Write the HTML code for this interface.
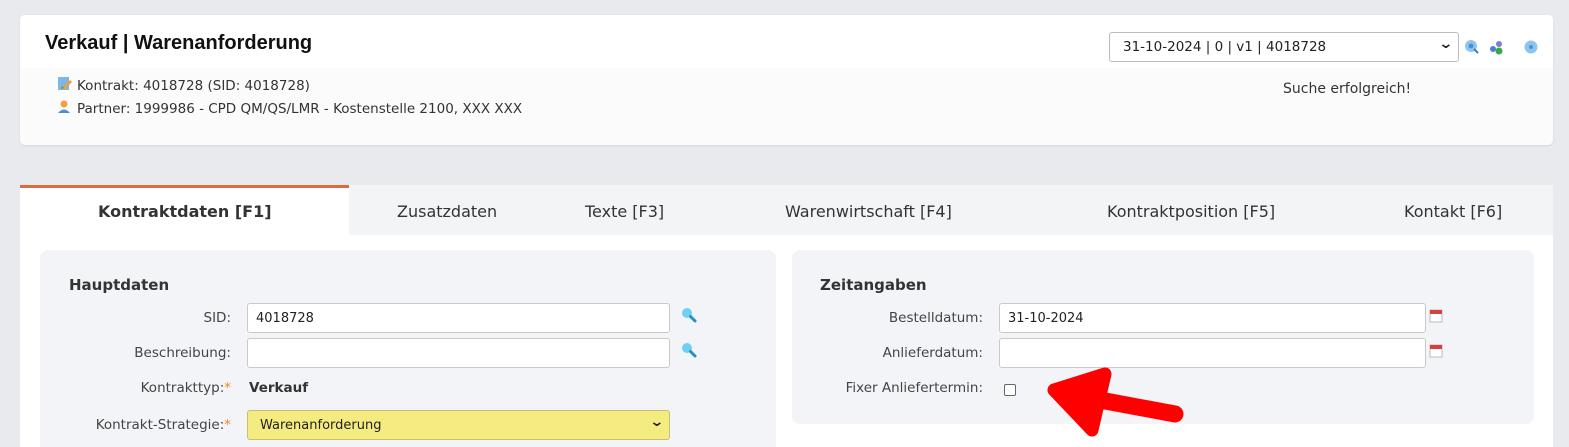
<!DOCTYPE html>
<html><head><meta charset="utf-8"><style>
*{box-sizing:border-box;margin:0;padding:0}
html,body{width:1569px;height:447px;overflow:hidden}
body{background:#e9eaee;font-family:"DejaVu Sans","Liberation Sans",sans-serif;color:#333;position:relative;font-size:13px}
.a{position:absolute}
.card{left:20px;top:15px;width:1533px;height:130px;background:#fbfbfc;border-radius:5px;box-shadow:0 1px 2px rgba(0,0,0,.08)}
.inp{position:absolute;background:#fff;border:1px solid #c9c9c9;border-radius:3px;height:30px;font-size:13px;padding:7px 8px;color:#222}
.lbl{position:absolute;text-align:right;font-size:13.5px;color:#444;white-space:nowrap}
.star{color:#f08a1a}
.mag{position:absolute;width:18px;height:18px}
.sel{position:absolute;right:6px;top:3px;font-size:14px;font-weight:bold;transform:scaleX(1.3)}
</style></head><body>
<div class="a card"></div>
<div class="a" style="left:20px;top:15px;width:1533px;height:53px;background:#fff;border-radius:5px 5px 0 0"></div>
<div class="a" style="left:45px;top:32px;font-family:'Liberation Sans',sans-serif;font-weight:bold;font-size:20px;color:#111">Verkauf | Warenanforderung</div>
<svg class="a" style="left:57px;top:76px" width="16" height="16"><rect x="1" y="1" width="11" height="13" fill="#7fb6e8"/><path d="M5 12 L13 4 L15 6 L7 14Z" fill="#e8a23a"/><path d="M4 13 l3 -1 -2 -2z" fill="#6a9a30"/></svg>
<div class="a" style="left:77px;top:78px;font-size:13.5px">Kontrakt: 4018728 (SID: 4018728)</div>
<svg class="a" style="left:57px;top:99px" width="14" height="15"><circle cx="7" cy="5" r="3.5" fill="#f0a040"/><path d="M1 14 Q7 7 13 14Z" fill="#4a8ed8"/></svg>
<div class="a" style="left:77px;top:101px;font-size:13.5px">Partner: 1999986 - CPD QM/QS/LMR - Kostenstelle 2100, XXX XXX</div>
<div class="a" style="left:1109px;top:32px;width:350px;height:30px;background:#fff;border:1px solid #bbb;border-radius:3px;font-size:13.5px;padding:6px 13px;color:#222">31-10-2024 | 0 | v1 | 4018728<span class="sel">&#8964;</span></div>
<svg class="a" style="left:1464px;top:39px" width="16" height="16"><circle cx="7" cy="7" r="6" fill="#8ec5ee"/><circle cx="7" cy="7" r="2.5" fill="#4a90d0"/><path d="M10 10 L14 14" stroke="#3a7cc0" stroke-width="2"/></svg>
<svg class="a" style="left:1489px;top:40px" width="16" height="16"><circle cx="10" cy="4" r="3" fill="#7a80d8"/><circle cx="4" cy="9" r="3" fill="#4a80d0"/><circle cx="10" cy="11" r="3.5" fill="#3aa84a"/></svg>
<svg class="a" style="left:1523px;top:39px" width="16" height="16"><circle cx="8" cy="8" r="6.5" fill="#8ec5ee"/><circle cx="8" cy="8" r="2" fill="#4a90d0"/></svg>
<div class="a" style="left:1283px;top:81px;font-size:14px;color:#333">Suche erfolgreich!</div>

<div class="a" style="left:20px;top:185px;width:1533px;height:50px;background:#f3f4f6"></div>
<div class="a" style="left:20px;top:185px;width:329px;height:50px;background:#fff;border-top:3px solid #df6a3c"></div>
<div class="a" style="left:20px;top:235px;width:1533px;height:212px;background:#fff"></div>
<div class="a" style="left:98px;top:202px;font-weight:bold;font-size:16px;color:#333">Kontraktdaten [F1]</div>
<div class="a" style="left:397px;top:202px;font-size:16px;color:#333">Zusatzdaten</div>
<div class="a" style="left:585px;top:202px;font-size:16px;color:#333">Texte [F3]</div>
<div class="a" style="left:785px;top:202px;font-size:16px;color:#333">Warenwirtschaft [F4]</div>
<div class="a" style="left:1107px;top:202px;font-size:16px;color:#333">Kontraktposition [F5]</div>
<div class="a" style="left:1404px;top:202px;font-size:16px;color:#333">Kontakt [F6]</div>

<div class="a" style="left:40px;top:250px;width:736px;height:210px;background:#f3f4f8;border-radius:8px"></div>
<div class="a" style="left:69px;top:276px;font-weight:bold;font-size:15px;color:#333">Hauptdaten</div>
<div class="lbl" style="left:30px;width:201px;top:310px">SID:</div>
<div class="inp" style="left:247px;top:303px;width:423px">4018728</div>
<svg class="mag" style="left:680px;top:306px" viewBox="0 0 18 18"><circle cx="7" cy="7" r="5" fill="#6fd0f0"/><path d="M10.5 10.5 L15 15" stroke="#2a8ec8" stroke-width="3" stroke-linecap="round"/></svg>
<div class="lbl" style="left:30px;width:201px;top:345px">Beschreibung:</div>
<div class="inp" style="left:247px;top:338px;width:423px"></div>
<svg class="mag" style="left:680px;top:341px" viewBox="0 0 18 18"><circle cx="7" cy="7" r="5" fill="#6fd0f0"/><path d="M10.5 10.5 L15 15" stroke="#2a8ec8" stroke-width="3" stroke-linecap="round"/></svg>
<div class="lbl" style="left:30px;width:201px;top:380px">Kontrakttyp:<span class="star">*</span></div>
<div class="a" style="left:249px;top:380px;font-weight:bold;font-size:13.5px">Verkauf</div>
<div class="lbl" style="left:30px;width:201px;top:417px">Kontrakt-Strategie:<span class="star">*</span></div>
<div class="inp" style="left:247px;top:410px;width:423px;background:#f4ec80;border-color:#c8c070;padding-left:12px">Warenanforderung<span class="sel">&#8964;</span></div>

<div class="a" style="left:792px;top:250px;width:742px;height:174px;background:#f3f4f8;border-radius:8px"></div>
<div class="a" style="left:820px;top:276px;font-weight:bold;font-size:15px;color:#333">Zeitangaben</div>
<div class="lbl" style="left:790px;width:193px;top:310px">Bestelldatum:</div>
<div class="inp" style="left:999px;top:303px;width:427px">31-10-2024</div>
<svg class="a" style="left:1429px;top:309px" width="14" height="14"><rect x="1" y="1" width="12" height="12" fill="#fff" stroke="#bbb"/><rect x="1" y="1" width="12" height="4" fill="#d84040"/></svg>
<div class="lbl" style="left:790px;width:193px;top:345px">Anlieferdatum:</div>
<div class="inp" style="left:999px;top:338px;width:427px"></div>
<svg class="a" style="left:1429px;top:344px" width="14" height="14"><rect x="1" y="1" width="12" height="12" fill="#fff" stroke="#bbb"/><rect x="1" y="1" width="12" height="4" fill="#d84040"/></svg>
<div class="lbl" style="left:790px;width:193px;top:380px">Fixer Anliefertermin:</div>
<div class="a" style="left:1004px;top:384px;width:12px;height:12px;border:1px solid #666;border-radius:2px;background:#fff"></div>
<svg class="a" style="left:1040px;top:362px" width="150" height="85"><path d="M60 38 L135 52" fill="none" stroke="#f00" stroke-width="17" stroke-linecap="round"/><path d="M65 12 L14 28 L52 68 Z" fill="#f00" stroke="#f00" stroke-width="13" stroke-linejoin="round"/></svg>
</body></html>
